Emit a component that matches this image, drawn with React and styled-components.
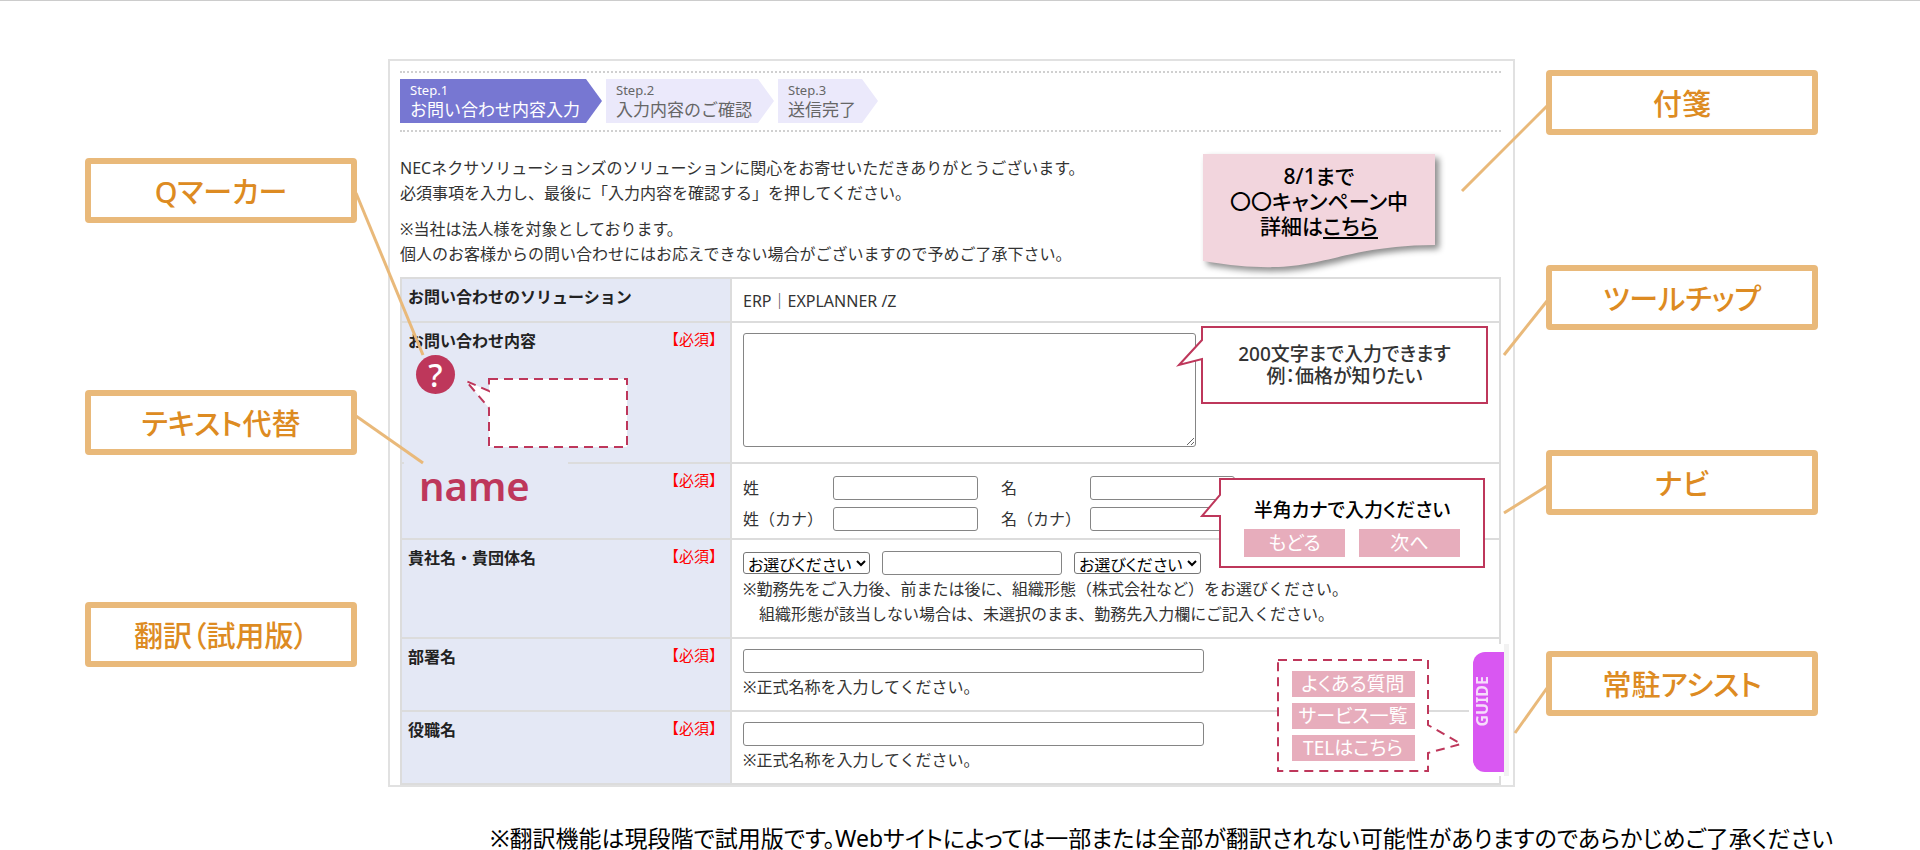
import React from 'react';
import styled, { createGlobalStyle } from 'styled-components';

const Global = createGlobalStyle`
  *, *::before, *::after { box-sizing: border-box; }
  body {
    margin: 0;
    background: #fff;
    color: #333;
    font: 16px/24px "Noto Sans", "Noto Sans CJK JP", sans-serif;
  }
  button, input, select, textarea { font-family: inherit; margin: 0; }
  p { margin: 0; }
`;

const ORANGE = '#e9b97a';
const CRIMSON = '#be375b';

const Page = styled.main`
  border-top: 1px solid #ccc;
  padding: 58px 102px 0 85px;
`;

const Stage = styled.div`
  display: grid;
  grid-template-columns: 272px minmax(0, 1fr) 272px;
  column-gap: 31px;
`;

const Rail = styled.aside`
  display: flex;
  flex-direction: column;
  padding-top: ${(p) => p.$top};
`;

const CalloutBox = styled.div`
  position: relative;
  z-index: 2;
  height: 65px;
  margin-top: ${(p) => p.$space || '0'};
  padding-top: 2px;
  border: 6px solid ${ORANGE};
  border-radius: 4px;
  display: flex;
  align-items: center;
  justify-content: center;
  background: #fff;
  color: #dd8b22;
  font-size: 29px;
  line-height: 40px;
  font-weight: 500;
  font-feature-settings: "palt";
`;

const Connector = styled.svg`
  position: absolute;
  top: ${(p) => p.$top};
  ${(p) => (p.$side === 'left' ? 'left: 265px;' : 'right: 265px;')}
  overflow: visible;
  pointer-events: none;
`;

function Callout({ text, space, side, top, w, h }) {
  const x1 = side === 'left' ? 0 : w;
  return (
    <CalloutBox $space={space}>
      {text}
      {w && (
        <Connector $top={top} $side={side} width={w} height={h} aria-hidden="true">
          <line x1={x1} y1="0" x2={w - x1} y2={h} stroke={ORANGE} strokeWidth="3" />
        </Connector>
      )}
    </CalloutBox>
  );
}

const Panel = styled.section`
  position: relative;
  border: 2px solid #e1e1e1;
  padding: 10px 12px 0 10px;
`;

const Steps = styled.ol`
  list-style: none;
  margin: 0;
  padding: 6px 0 7px;
  display: flex;
  gap: 4px;
  border-top: 2px dotted #d0d0d0;
  border-bottom: 2px dotted #d0d0d0;
`;

const Step = styled.li`
  height: 44px;
  padding: 2px 22px 0 10px;
  clip-path: polygon(0 0, calc(100% - 16px) 0, 100% 50%, calc(100% - 16px) 100%, 0 100%);
  background: ${(p) => (p.$active ? '#7777d2' : '#ebe9fb')};
  color: ${(p) => (p.$active ? '#fff' : '#666')};
  font-size: 17px;
  line-height: 22px;
`;

const StepNo = styled.span`
  display: block;
  font-size: 13px;
  line-height: 18px;
`;

const Intro = styled.div`
  display: flex;
  flex-direction: column;
  gap: 11px;
  padding: 24px 0 10px;
  line-height: 25px;
`;

const FormTable = styled.table`
  width: 100%;
  table-layout: fixed;
  border-collapse: collapse;
`;

const Row = styled.tr`
  height: ${(p) => p.$h};
`;

const HeadCell = styled.th`
  position: relative;
  width: 330px;
  padding: 6px 6px 0;
  border: 2px solid #dcdcdc;
  background: #e4e8f5;
  vertical-align: top;
  text-align: left;
  color: #222;
`;

const HeadLine = styled.div`
  display: flex;
  justify-content: space-between;
  align-items: flex-start;
`;

const Required = styled.span`
  margin-left: auto;
  color: #f00;
  font-size: 15px;
  line-height: 20px;
  font-weight: 400;
`;

const Cell = styled.td`
  padding: ${(p) => p.$pad || '10px'} 11px 0;
  border: 2px solid #dcdcdc;
  vertical-align: top;
`;

const Field = styled.input`
  display: block;
  width: ${(p) => p.$w};
  height: 24px;
  border: 1px solid #858585;
  border-radius: 3px;
  background: #fff;
  padding: 0 4px;
`;

const Area = styled.textarea`
  display: block;
  width: 453px;
  height: 114px;
  border: 1px solid #858585;
  border-radius: 3px;
  background: #fff;
`;

const NameFields = styled.div`
  display: grid;
  grid-template-columns: 90px 145px 112px 145px;
  row-gap: 7px;
  & > :nth-child(4n + 3) { margin-left: 23px; }
`;

const Inline = styled.div`
  display: flex;
  align-items: center;
  gap: 12px;
`;

const Choice = styled.select`
  width: 127px;
  height: 22px;
  border: 1px solid #767676;
  border-radius: 3px;
  background: #fff;
  color: #000;
  padding: 0;
  font-size: 16px;
  line-height: 20px;
  font-feature-settings: "palt";
`;

const Note = styled.p`
  margin-top: 2px;
  line-height: 25px;
`;

const Indent = styled.span`
  display: block;
  padding-left: 16px;
`;

const Marker = styled.button`
  position: absolute;
  z-index: 3;
  left: 14px;
  top: 32px;
  width: 39px;
  height: 39px;
  border: 0;
  border-radius: 50%;
  padding: 0;
  background: ${CRIMSON};
  color: #fff;
  font-size: 32px;
  line-height: 39px;
  font-weight: 500;
`;

const Alt = styled.label`
  position: absolute;
  left: 2px;
  top: -3px;
  width: 164px;
  padding-left: 15px;
  background: #e4e8f5;
  color: ${CRIMSON};
  font-size: 40px;
  line-height: 50px;
  font-weight: 600;
`;

const Bubble = styled.div`
  position: absolute;
  z-index: 3;
  left: ${(p) => p.$left};
  right: ${(p) => p.$right};
  top: ${(p) => p.$top};
  width: ${(p) => p.$w};
  height: ${(p) => p.$h};
  padding-top: ${(p) => p.$pad || '0'};
  display: flex;
  flex-direction: column;
  align-items: center;
  justify-content: center;
  gap: ${(p) => p.$gap || '0'};
  color: ${(p) => p.$ink || '#333'};
  font-size: 19px;
  line-height: 22px;
  font-weight: 500;
  font-feature-settings: "palt";
`;

const Outline = styled.svg`
  position: absolute;
  inset: 0;
  width: 100%;
  height: 100%;
  overflow: visible;
`;

const Above = styled.div`
  position: relative;
  text-align: center;
`;

const PinkRow = styled.div`
  position: relative;
  display: flex;
  gap: 14px;
`;

const Pink = styled.button`
  position: relative;
  width: ${(p) => p.$w};
  height: ${(p) => p.$h};
  border: 0;
  padding: 0;
  background: #e7adbc;
  color: #fff;
  font-size: 19px;
  line-height: 26px;
  font-feature-settings: "palt";
`;

const Sticky = styled(Bubble)`
  justify-content: flex-start;
  padding-top: 10px;
  font-size: 21px;
  line-height: 25px;
`;

const StickyShape = styled(Outline)`
  filter: drop-shadow(4px 4px 3px rgba(0, 0, 0, 0.45));
`;

const StickyLink = styled.a`
  color: inherit;
  text-underline-offset: 3px;
`;

const GuideDock = styled.div`
  position: absolute;
  z-index: 3;
  right: 4px;
  top: 583px;
  height: 132px;
  padding: 8px 0 0 4px;
  background: #fff;
  border-right: 5px solid #f2f2f2;
`;

const Guide = styled.button`
  display: flex;
  align-items: center;
  justify-content: center;
  width: 31px;
  height: 120px;
  border: 0;
  border-radius: 12px 0 0 12px;
  padding: 0 14px 22px 0;
  background: #d957f2;
  color: #f6dcfb;
  font-size: 16px;
  line-height: 20px;
  font-weight: 700;
`;

const Sideways = styled.span`
  writing-mode: vertical-rl;
  transform: rotate(180deg);
`;

const Footnote = styled.p`
  margin-top: 38px;
  margin-right: -15px;
  text-align: right;
  color: #000;
  font-size: 23px;
  line-height: 26px;
  font-feature-settings: "palt";
`;

function Item({ h, pad, label, htmlFor, required, extra, children }) {
  return (
    <Row $h={h}>
      <HeadCell scope="row">
        <HeadLine>
          {label && (htmlFor ? <label htmlFor={htmlFor}>{label}</label> : label)}
          {required && <Required>【必須】</Required>}
        </HeadLine>
        {extra}
      </HeadCell>
      <Cell $pad={pad}>{children}</Cell>
    </Row>
  );
}

export default function App() {
  return (
    <>
      <Global />
      <Page>
        <Stage>
          <Rail $top="99px">
            <Callout text="Qマーカー" side="left" top="29px" w={67} h={162} />
            <Callout text="テキスト代替" space="167px" side="left" top="20px" w={67} h={47} />
            <Callout text="翻訳（試用版）" space="147px" />
          </Rail>

          <Panel>
            <Steps>
              <Step $active><StepNo>Step.1</StepNo>お問い合わせ内容入力</Step>
              <Step><StepNo>Step.2</StepNo>入力内容のご確認</Step>
              <Step><StepNo>Step.3</StepNo>送信完了</Step>
            </Steps>
            <Intro>
              <p>
                NECネクサソリューションズのソリューションに関心をお寄せいただきありがとうございます。<br />
                必須事項を入力し、最後に「入力内容を確認する」を押してください。
              </p>
              <p>
                ※当社は法人様を対象としております。<br />
                個人のお客様からの問い合わせにはお応えできない場合がございますので予めご了承下さい。
              </p>
            </Intro>

            <FormTable>
              <tbody>
                <Item h="44px" label="お問い合わせのソリューション">ERP｜EXPLANNER /Z</Item>
                <Item
                  h="141px"
                  label="お問い合わせ内容"
                  htmlFor="inquiry"
                  required
                  extra={
                    <>
                      <Marker type="button">?</Marker>
                      <Bubble $left="87px" $top="56px" $w="138px" $h="68px">
                        <Outline aria-hidden="true">
                          <path d="M0 0H138V68H0V29L-23 2L0 12Z" fill="#fff" stroke={CRIMSON} strokeWidth="2" strokeDasharray="9 6" />
                        </Outline>
                      </Bubble>
                    </>
                  }
                >
                  <Area id="inquiry" />
                </Item>
                <Item h="76px" pad="12px" required extra={<Alt htmlFor="sei">name</Alt>}>
                  <NameFields>
                    <label htmlFor="sei">姓</label>
                    <Field id="sei" $w="145px" />
                    <label htmlFor="mei">名</label>
                    <Field id="mei" $w="145px" />
                    <label htmlFor="sei-kana">姓（カナ）</label>
                    <Field id="sei-kana" $w="145px" />
                    <label htmlFor="mei-kana">名（カナ）</label>
                    <Field id="mei-kana" $w="145px" />
                  </NameFields>
                </Item>
                <Item h="99px" pad="11px" label="貴社名・貴団体名" htmlFor="company" required>
                  <Inline>
                    <Choice aria-label="組織形態（前）"><option>お選びください</option></Choice>
                    <Field id="company" $w="180px" />
                    <Choice aria-label="組織形態（後）"><option>お選びください</option></Choice>
                  </Inline>
                  <Note>
                    ※勤務先をご入力後、前または後に、組織形態（株式会社など）をお選びください。
                    <Indent>組織形態が該当しない場合は、未選択のまま、勤務先入力欄にご記入ください。</Indent>
                  </Note>
                </Item>
                <Item h="73px" label="部署名" htmlFor="dept" required>
                  <Field id="dept" $w="461px" />
                  <Note>※正式名称を入力してください。</Note>
                </Item>
                <Item h="73px" label="役職名" htmlFor="post" required>
                  <Field id="post" $w="461px" />
                  <Note>※正式名称を入力してください。</Note>
                </Item>
              </tbody>
            </FormTable>

            <Sticky $right="78px" $top="93px" $w="232px" $h="114px" $ink="#000">
              <StickyShape viewBox="0 0 232 114" preserveAspectRatio="none" aria-hidden="true">
                <path d="M0 0H232V91C120 92 120 127 0 107Z" fill="#f2d5dd" />
              </StickyShape>
              <Above>
                8/1まで<br />
                〇〇キャンペーン中<br />
                詳細は<StickyLink href="#campaign">こちら</StickyLink>
              </Above>
            </Sticky>

            <Bubble $right="26px" $top="266px" $w="285px" $h="76px">
              <Outline aria-hidden="true">
                <path d="M0 0H285V76H0V32L-23 38L0 13Z" fill="#fff" stroke={CRIMSON} strokeWidth="2" />
              </Outline>
              <Above>
                200文字まで入力できます<br />
                例：価格が知りたい
              </Above>
            </Bubble>

            <Bubble $right="29px" $top="418px" $w="264px" $h="88px" $ink="#000" $gap="8px" $pad="10px">
              <Outline aria-hidden="true">
                <path d="M0 0H264V88H0V37L-18 37L0 16Z" fill="#fff" stroke={CRIMSON} strokeWidth="2" />
              </Outline>
              <Above>半角カナで入力ください</Above>
              <PinkRow>
                <Pink type="button" $w="101px" $h="28px">もどる</Pink>
                <Pink type="button" $w="101px" $h="28px">次へ</Pink>
              </PinkRow>
            </Bubble>

            <Bubble $right="85px" $top="599px" $w="150px" $h="111px" $gap="6px">
              <Outline aria-hidden="true">
                <path d="M0 0H150V65L183 84L150 93V111H0Z" fill="#fff" stroke={CRIMSON} strokeWidth="2" strokeDasharray="9 6" />
              </Outline>
              <Pink type="button" $w="123px" $h="26px">よくある質問</Pink>
              <Pink type="button" $w="123px" $h="26px">サービス一覧</Pink>
              <Pink type="button" $w="123px" $h="26px">TELはこちら</Pink>
            </Bubble>

            <GuideDock>
              <Guide type="button"><Sideways>GUIDE</Sideways></Guide>
            </GuideDock>
          </Panel>

          <Rail $top="11px">
            <Callout text="付箋" side="right" top="30px" w={85} h={85} />
            <Callout text="ツールチップ" space="130px" side="right" top="30px" w={43} h={54} />
            <Callout text="ナビ" space="120px" side="right" top="30px" w={43} h={27} />
            <Callout text="常駐アシスト" space="136px" side="right" top="31px" w={32} h={45} />
          </Rail>
        </Stage>
        <Footnote>
          ※翻訳機能は現段階で試用版です。Webサイトによっては一部または全部が翻訳されない可能性がありますのであらかじめご了承ください
        </Footnote>
      </Page>
    </>
  );
}
